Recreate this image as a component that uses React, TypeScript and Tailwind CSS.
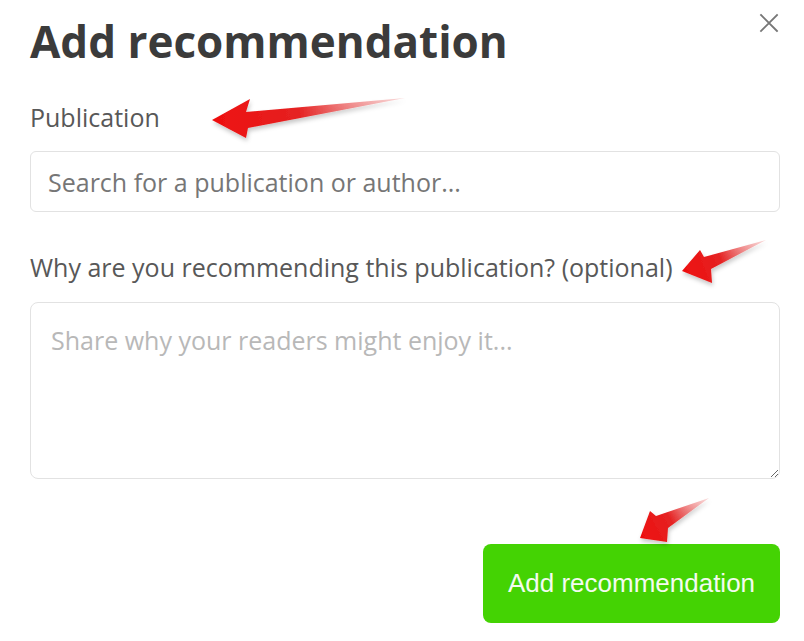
import React from "react";

function Arrow({ d, id, x1, y1, x2, y2 }: { d: string; id: string; x1: number; y1: number; x2: number; y2: number }) {
  return (
    <svg className="absolute left-0 top-0 pointer-events-none" width="804" height="641" viewBox="0 0 804 641">
      <defs>
        <linearGradient id={id} gradientUnits="userSpaceOnUse" x1={x1} y1={y1} x2={x2} y2={y2}>
          <stop offset="0" stopColor="#ee0f0f" />
          <stop offset="0.45" stopColor="#e52222" />
          <stop offset="1" stopColor="#f4b4b4" stopOpacity="0.5" />
        </linearGradient>
        <filter id={id + "s"} x="-20%" y="-50%" width="140%" height="200%">
          <feDropShadow dx="1" dy="3" stdDeviation="2" floodColor="#000" floodOpacity="0.22" />
        </filter>
      </defs>
      <path d={d} fill={`url(#${id})`} filter={`url(#${id}s)`} />
    </svg>
  );
}

export default function App() {
  return (
    <div className="relative w-[804px] h-[641px] bg-white overflow-hidden" style={{ fontFamily: '"Open Sans", "Noto Sans", sans-serif' }}>
      <div className="flex flex-col pl-[30px] pr-[24px]">
        <div className="flex justify-between items-start">
          <h1 className="mt-[9px] text-[44px] leading-[64px] font-bold text-[#3b3b3b]">Add recommendation</h1>
          <button className="mt-[10px] mr-[-2px] w-[26px] h-[26px] flex items-center justify-center">
            <svg width="20" height="20" viewBox="0 0 20 20" fill="none" stroke="#777" strokeWidth="1.8" strokeLinecap="square">
              <path d="M2 2L18 18M18 2L2 18" />
            </svg>
          </button>
        </div>
        <label className="mt-[27px] text-[25px] leading-[34px] text-[#585858]">Publication</label>
        <input
          className="mt-[17px] h-[61px] w-full rounded-[6px] border border-[#e2e2e2] px-[17px] text-[25px] leading-[34px] text-[#444] placeholder:text-[#767676] outline-none"
          placeholder="Search for a publication or author..."
        />
        <label className="mt-[38px] text-[25px] leading-[34px] text-[#585858]">Why are you recommending this publication? (optional)</label>
        <textarea
          className="mt-[18px] h-[177px] w-full rounded-[8px] border border-[#e2e2e2] px-[20px] pt-[20px] pb-[10px] text-[25px] leading-[34px] text-[#444] placeholder:text-[#b8b8b8] outline-none"
          placeholder="Share why your readers might enjoy it..."
        />
        <div className="flex justify-end mt-[65px]">
          <button
            className="h-[79px] w-[297px] rounded-[8px] bg-[#44d303] text-[#f3fbef] text-[26px]"
            style={{ fontFamily: '"Liberation Sans", Arial, sans-serif' }}
          >
            Add recommendation
          </button>
        </div>
      </div>
      <Arrow id="a1" x1={212} y1={120} x2={405} y2={98} d="M212 120 L250 99 L246 112 L405 98 L248 128 L246 138 Z" />
      <Arrow id="a2" x1={682} y1={271} x2={766} y2={241} d="M682 271 L700 250 L704 257 L766 240 L711 269 L712 283 Z" />
      <Arrow id="a3" x1={640} y1={538} x2={709} y2={499} d="M640 538 L650 511 L656 516 L709 498 L668 528 L667 542 Z" />
    </div>
  );
}
